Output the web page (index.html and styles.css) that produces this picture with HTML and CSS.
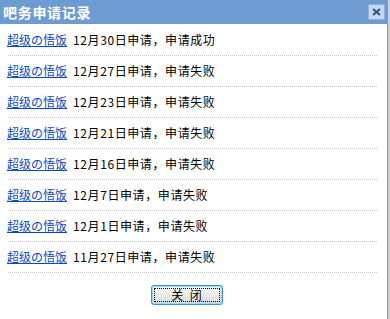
FILE: index.html
```html
<!DOCTYPE html>
<html lang="zh-CN">
<head>
<meta charset="utf-8">
<title>吧务申请记录</title>
<link rel="stylesheet" href="styles.css">
</head>
<body>
<div class="dialog">
  <div class="header">
    <span class="title">吧务申请记录</span>
    <span class="close">
      <svg width="9" height="8" viewBox="0 0 9 8"><path d="M1 1 L8 7 M8 1 L1 7" stroke="#2c4f85" stroke-width="2" fill="none"/></svg>
    </span>
  </div>
  <ul class="list">
    <li class="row"><a class="user" href="#">超级の悟饭</a><span class="msg">12月30日申请，申请成功</span></li>
    <li class="row"><a class="user" href="#">超级の悟饭</a><span class="msg">12月27日申请，申请失败</span></li>
    <li class="row"><a class="user" href="#">超级の悟饭</a><span class="msg">12月23日申请，申请失败</span></li>
    <li class="row"><a class="user" href="#">超级の悟饭</a><span class="msg">12月21日申请，申请失败</span></li>
    <li class="row"><a class="user" href="#">超级の悟饭</a><span class="msg">12月16日申请，申请失败</span></li>
    <li class="row"><a class="user" href="#">超级の悟饭</a><span class="msg">12月7日申请，申请失败</span></li>
    <li class="row"><a class="user" href="#">超级の悟饭</a><span class="msg">12月1日申请，申请失败</span></li>
    <li class="row"><a class="user" href="#">超级の悟饭</a><span class="msg">11月27日申请，申请失败</span></li>
  </ul>
  <div class="footer">
    <button class="btn" type="button"><span class="focus"><span class="btn-text">关 闭</span></span></button>
  </div>
</div>
</body>
</html>
```
FILE: styles.css
```css
html, body {
  margin: 0;
  padding: 0;
}
body {
  background: #cfcfcf;
  width: 390px;
  height: 319px;
  overflow: hidden;
  font-family: "Noto Sans CJK SC", "Liberation Sans", sans-serif;
  font-size: 12px;
  color: #000;
}
.dialog {
  width: 387px;
  height: 319px;
  background: #fff;
  border-right: 1px solid #6d9bd3;
  display: flex;
  flex-direction: column;
}
.header {
  height: 24px;
  background: #6e9bd1;
  display: flex;
  align-items: center;
  justify-content: space-between;
  padding: 0 2px 0 3px;
}
.title {
  color: #fff;
  font-weight: bold;
  font-size: 14px;
  letter-spacing: 0.7px;
  line-height: 24px;
}
.close {
  width: 15px;
  height: 14px;
  background: #c8d8ee;
  border: 1px solid #8fb0dc;
  display: flex;
  align-items: center;
  justify-content: center;
}
.list {
  list-style: none;
  margin: 0 10px 0 8px;
  padding: 1px 0 0 0;
}
.row {
  height: 30px;
  line-height: 30px;
  border-bottom: 1px dotted #c4c4c4;
  display: flex;
  align-items: center;
  white-space: nowrap;
}
.user {
  color: #0b47c6;
  text-decoration: underline;
  margin-left: -1px;
}
.msg {
  margin-left: 6px;
  letter-spacing: 0.6px;
}
.footer {
  display: flex;
  justify-content: center;
  padding: 12px 14px 0 0;
}
.btn {
  width: 72px;
  height: 20px;
  padding: 2px;
  margin: 0;
  border: 1px solid #2f95d6;
  border-radius: 3px;
  box-shadow: 0 0 0 1px #9edaf6 inset;
  background: linear-gradient(#ffffff, #e6e6e6 60%, #d6d6d6);
  font-family: "Noto Sans CJK SC", sans-serif;
  font-size: 12px;
  color: #000;
  display: flex;
}
.focus {
  flex: 1;
  border: 1px dotted #000;
  line-height: 12px;
  display: flex;
  align-items: center;
  justify-content: center;
}
.btn-text {
  white-space: pre;
  word-spacing: 4px;
}
```
